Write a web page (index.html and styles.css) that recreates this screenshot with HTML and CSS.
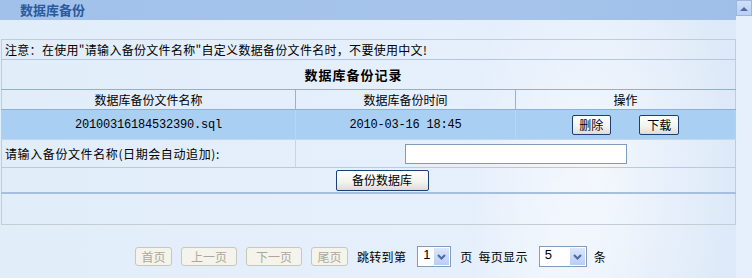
FILE: index.html
```html
<!DOCTYPE html>
<html lang="zh-CN">

<head>
    <meta charset="UTF-8">
    <title>数据库备份</title>
    <link rel="stylesheet" href="styles.css">
</head>

<body>
    <div class="page">
        <div class="main">
            <div class="title-bar">数据库备份</div>

            <table class="backup-table">
                <tr class="row-note">
                    <td colspan="3">注意：在使用"请输入备份文件名称"自定义数据备份文件名时，不要使用中文!</td>
                </tr>
                <tr class="row-caption">
                    <td colspan="3">数据库备份记录</td>
                </tr>
                <tr class="row-head">
                    <td class="col-name">数据库备份文件名称</td>
                    <td class="col-time">数据库备份时间</td>
                    <td class="col-op">操作</td>
                </tr>
                <tr class="row-data">
                    <td class="mono">20100316184532390.sql</td>
                    <td class="mono">2010-03-16 18:45</td>
                    <td>
                        <button class="btn">删除</button>
                        <button class="btn btn-gap">下载</button>
                    </td>
                </tr>
                <tr class="row-input">
                    <td class="label">请输入备份文件名称(日期会自动追加):</td>
                    <td colspan="2"><input type="text" class="name-input"></td>
                </tr>
                <tr class="row-submit">
                    <td colspan="3"><button class="btn btn-backup">备份数据库</button></td>
                </tr>
                <tr class="row-empty">
                    <td colspan="3"></td>
                </tr>
            </table>

            <div class="pager">
                <button class="pager-btn w-short" disabled>首页</button>
                <button class="pager-btn w-long" disabled>上一页</button>
                <button class="pager-btn w-long" disabled>下一页</button>
                <button class="pager-btn w-short" disabled>尾页</button>
                <span class="pager-text">跳转到第</span>
                <div class="fake-select select-page">
                    <span>1</span>
                    <span class="arrow"><svg width="9" height="6" viewBox="0 0 9 6"><path d="M1 1 L4.5 4.5 L8 1" fill="none" stroke="#4d6a9c" stroke-width="2"/></svg></span>
                </div>
                <span class="pager-text t-page">页</span>
                <span class="pager-text t-show">每页显示</span>
                <div class="fake-select select-size">
                    <span>5</span>
                    <span class="arrow"><svg width="9" height="6" viewBox="0 0 9 6"><path d="M1 1 L4.5 4.5 L8 1" fill="none" stroke="#4d6a9c" stroke-width="2"/></svg></span>
                </div>
                <span class="pager-text t-unit">条</span>
            </div>
        </div>

        <div class="scrollbar">
            <div class="scroll-up">
                <svg width="8" height="5" viewBox="0 0 8 5"><path d="M0 5 L4 1 L8 5 Z" fill="#4d6a9c"/></svg>
            </div>
        </div>
    </div>
</body>

</html>
```

FILE: styles.css
```css
body {
    margin: 0;
    font-family: "Noto Sans CJK SC", "DejaVu Sans", sans-serif;
    font-size: 12px;
    color: #000;
    overflow: hidden;
}

.page {
    display: flex;
    height: 278px;
    background:
        radial-gradient(ellipse 130px 260px at 600px 170px, rgba(255, 255, 255, 0.55), rgba(255, 255, 255, 0) 100%),
        radial-gradient(ellipse 90px 200px at 560px 260px, rgba(255, 255, 255, 0.35), rgba(255, 255, 255, 0) 100%),
        linear-gradient(to right, #e2edfa, #e6f0fc 60%, #dde9f8);
}

.main {
    width: 736px;
}

.title-bar {
    height: 20px;
    line-height: 20px;
    padding-left: 20px;
    background: linear-gradient(to right, #a2c1ea, #a6c4eb 70%, #9fbfe9);
    color: #2a5a9a;
    font-size: 13px;
    font-weight: bold;
}

.backup-table {
    margin: 19px 0 0 1px;
    width: 735px;
    border-collapse: collapse;
    border-left: 1px solid #c3cbd6;
    border-right: 1px solid #c3cbd6;
}

.backup-table td {
    padding: 0;
    text-align: center;
    vertical-align: middle;
    line-height: 14px;
}

.row-note td {
    height: 19px;
    text-align: left;
    padding-left: 3px;
    letter-spacing: 0.3px;
    border-top: 1px solid #c3cbd6;
    border-bottom: 1px solid #b4c7de;
}

.row-caption td {
    height: 29px;
    padding-right: 30px;
    font-weight: bold;
    font-size: 13px;
    letter-spacing: 1px;
    border-bottom: 1px solid #8fb0d6;
}

.row-head td {
    height: 19px;
    border-bottom: 1px solid #8eafd6;
}

.row-head .col-name {
    width: 293px;
    border-right: 1px solid #92b2d8;
}

.row-head .col-time {
    width: 219px;
    border-right: 1px solid #92b2d8;
}

.row-data td {
    height: 29px;
    background: #a9cff2;
    border-bottom: 1px solid #c4d6ea;
}

.row-data td + td {
    border-left: 1px solid #b9d6f1;
}

.mono {
    font-family: "Liberation Mono", "DejaVu Sans Mono", monospace;
    font-size: 12px;
    letter-spacing: -0.2px;
}

.row-input td {
    height: 27px;
    border-bottom: 1px solid #b8cae0;
}

.row-input .label {
    text-align: left;
    padding-left: 3px;
    letter-spacing: 0.6px;
    border-right: 1px solid #c6d6e8;
}

.name-input {
    box-sizing: border-box;
    width: 222px;
    height: 20px;
    margin: 0;
    border: 1px solid #7f9db9;
    background: #fff;
    vertical-align: middle;
}

.row-submit td {
    height: 24px;
    border-bottom: 2px solid #a5bfdd;
}

.row-empty td {
    height: 30px;
    border-bottom: 1px solid #c6ccd3;
}

.btn {
    box-sizing: border-box;
    height: 20px;
    width: 39px;
    padding: 0;
    margin: 0;
    border: 1px solid #1c3f74;
    border-radius: 2px;
    background: linear-gradient(to bottom, #ffffff, #f2f2ee 60%, #dedcd4);
    font-family: "Noto Sans CJK SC", sans-serif;
    font-size: 12px;
    line-height: 18px;
    color: #000;
    vertical-align: middle;
}

.btn-gap {
    margin-left: 26px;
    width: 40px;
}

.btn-backup {
    width: 93px;
    height: 21px;
    margin-left: 27px;
}

.pager {
    display: flex;
    align-items: center;
    height: 21px;
    margin-top: 21px;
    padding-left: 135px;
}

.pager-btn {
    box-sizing: border-box;
    height: 19px;
    padding: 0;
    margin: 0 9px 0 0;
    border: 1px solid #c9c7ba;
    border-radius: 3px;
    background: #f4f3ec;
    color: #aca899;
    font-family: "Noto Sans CJK SC", sans-serif;
    font-size: 12px;
    line-height: 17px;
}

.w-short {
    width: 37px;
}

.w-long {
    width: 56px;
}

.pager-text {
    line-height: 21px;
    letter-spacing: 0.3px;
}

.fake-select {
    box-sizing: border-box;
    display: flex;
    align-items: stretch;
    justify-content: space-between;
    height: 21px;
    margin-left: 11px;
    border: 1px solid #7f9db9;
    background: #fff;
    font-family: "Liberation Sans", sans-serif;
    font-size: 13px;
}

.fake-select > span:first-child {
    padding-left: 5px;
    line-height: 16px;
}

.select-page {
    width: 34px;
}

.select-size {
    width: 48px;
    margin-left: 11px;
}

.arrow {
    width: 15px;
    margin: 1px;
    display: flex;
    align-items: center;
    justify-content: center;
    background: linear-gradient(to bottom, #dbe6fc, #b9cdf6);
    border: 0;
}

.t-page {
    margin-left: 9px;
}

.t-show {
    margin-left: 6px;
}

.t-unit {
    margin-left: 7px;
}

.scrollbar {
    width: 16px;
    background: #e6effc;
}

.scroll-up {
    box-sizing: border-box;
    height: 16px;
    display: flex;
    align-items: center;
    justify-content: center;
    border: 1px solid #9cb6de;
    background: linear-gradient(to bottom, #cfdff8, #b9cff3);
}
```
